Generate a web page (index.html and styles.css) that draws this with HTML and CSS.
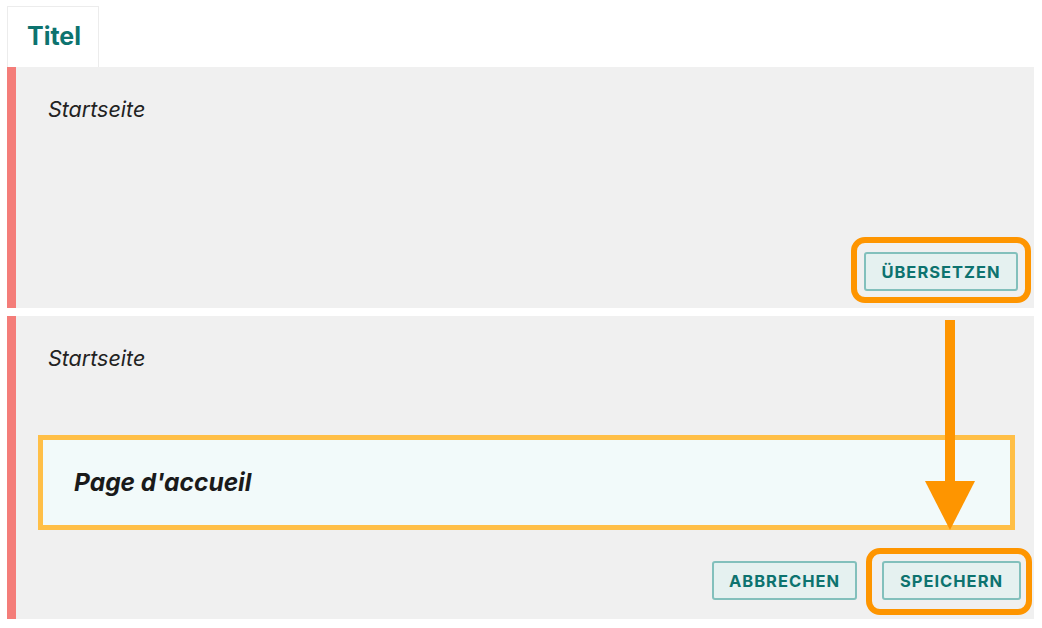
FILE: index.html
```html
<!DOCTYPE html>
<html lang="de">
<head>
<meta charset="utf-8">
<title>Titel</title>
<link rel="stylesheet" href="styles.css">
</head>
<body>
<div class="page">
  <div class="tabs">
    <div class="tab">Titel</div>
  </div>
  <div class="panel panel-one">
    <p class="source">Startseite</p>
    <div class="actions">
      <span class="ring-wrap ring-a"><button class="btn">Übersetzen</button></span>
    </div>
  </div>
  <div class="panel panel-two">
    <p class="source">Startseite</p>
    <div class="translation">Page d'accueil</div>
    <div class="actions actions-two">
      <button class="btn btn-cancel">Abbrechen</button>
      <span class="ring-wrap ring-b"><button class="btn btn-save">Speichern</button></span>
    </div>
  </div>
  <svg class="arrow" width="50" height="210" viewBox="0 0 50 210" aria-hidden="true">
    <rect x="20" y="0" width="10" height="165" fill="#fe9500"/>
    <polygon points="0,161 50,161 25,210" fill="#fe9500"/>
  </svg>
</div>
</body>
</html>
```
FILE: styles.css
```css
* { box-sizing: border-box; }
html, body { margin: 0; padding: 0; background: #ffffff; }
body {
  font-family: Inter, "Noto Sans", "Liberation Sans", sans-serif;
  color: #222222;
}
.page {
  position: relative;
  width: 1042px;
  height: 628px;
  padding: 6px 8px 0 7px;
}
.tabs { display: flex; }
.tab {
  width: 92px;
  height: 61px;
  border: 1px solid #ececec;
  border-bottom: none;
  display: flex;
  align-items: center;
  justify-content: center;
  padding-left: 2px;
  padding-bottom: 3px;
  font-weight: 700;
  font-size: 25px;
  color: #0d736f;
}
.panel {
  background: #f0f0f0;
  border-left: 9px solid #f47d79;
  display: flex;
  flex-direction: column;
}
.panel-one {
  height: 241px;
  padding: 30px 16px 17px 32px;
}
.panel-two {
  margin-top: 8px;
  height: 303px;
  padding: 30px 13px 19px 32px;
}
.source {
  margin: 0;
  font-style: italic;
  font-size: 21.5px;
  line-height: 25px;
  color: #222222;
}
.actions {
  margin-top: auto;
  display: flex;
  justify-content: flex-end;
  gap: 25px;
}
.btn {
  height: 39px;
  padding: 0;
  background: #e5f1f0;
  border: 2px solid #82c0bc;
  border-radius: 3px;
  font-family: Inter, "Noto Sans", "Liberation Sans", sans-serif;
  font-weight: 700;
  font-size: 16.5px;
  letter-spacing: 1px;
  text-transform: uppercase;
  color: #0d736f;
}
.panel-one .btn { width: 154px; }
.btn-cancel { width: 145px; }
.btn-save { width: 139px; }
.translation {
  margin: 64px 6px 0 -10px;
  height: 95px;
  border: 5px solid #ffbf47;
  background: #f2fafa;
  display: flex;
  align-items: center;
  padding-left: 31px;
  padding-bottom: 2px;
  font-style: italic;
  font-weight: 700;
  font-size: 24.5px;
  color: #1a1a1a;
}
.ring-wrap { position: relative; display: inline-flex; }
.ring-wrap::after {
  content: "";
  position: absolute;
  border: 6px solid #fe9500;
  border-radius: 14px;
  pointer-events: none;
}
.ring-a::after { left: -13px; right: -13px; top: -15px; bottom: -12px; }
.ring-b::after { left: -16px; right: -11px; top: -13px; bottom: -15px; }
.arrow {
  position: absolute;
  left: 925px;
  top: 320px;
}
```
